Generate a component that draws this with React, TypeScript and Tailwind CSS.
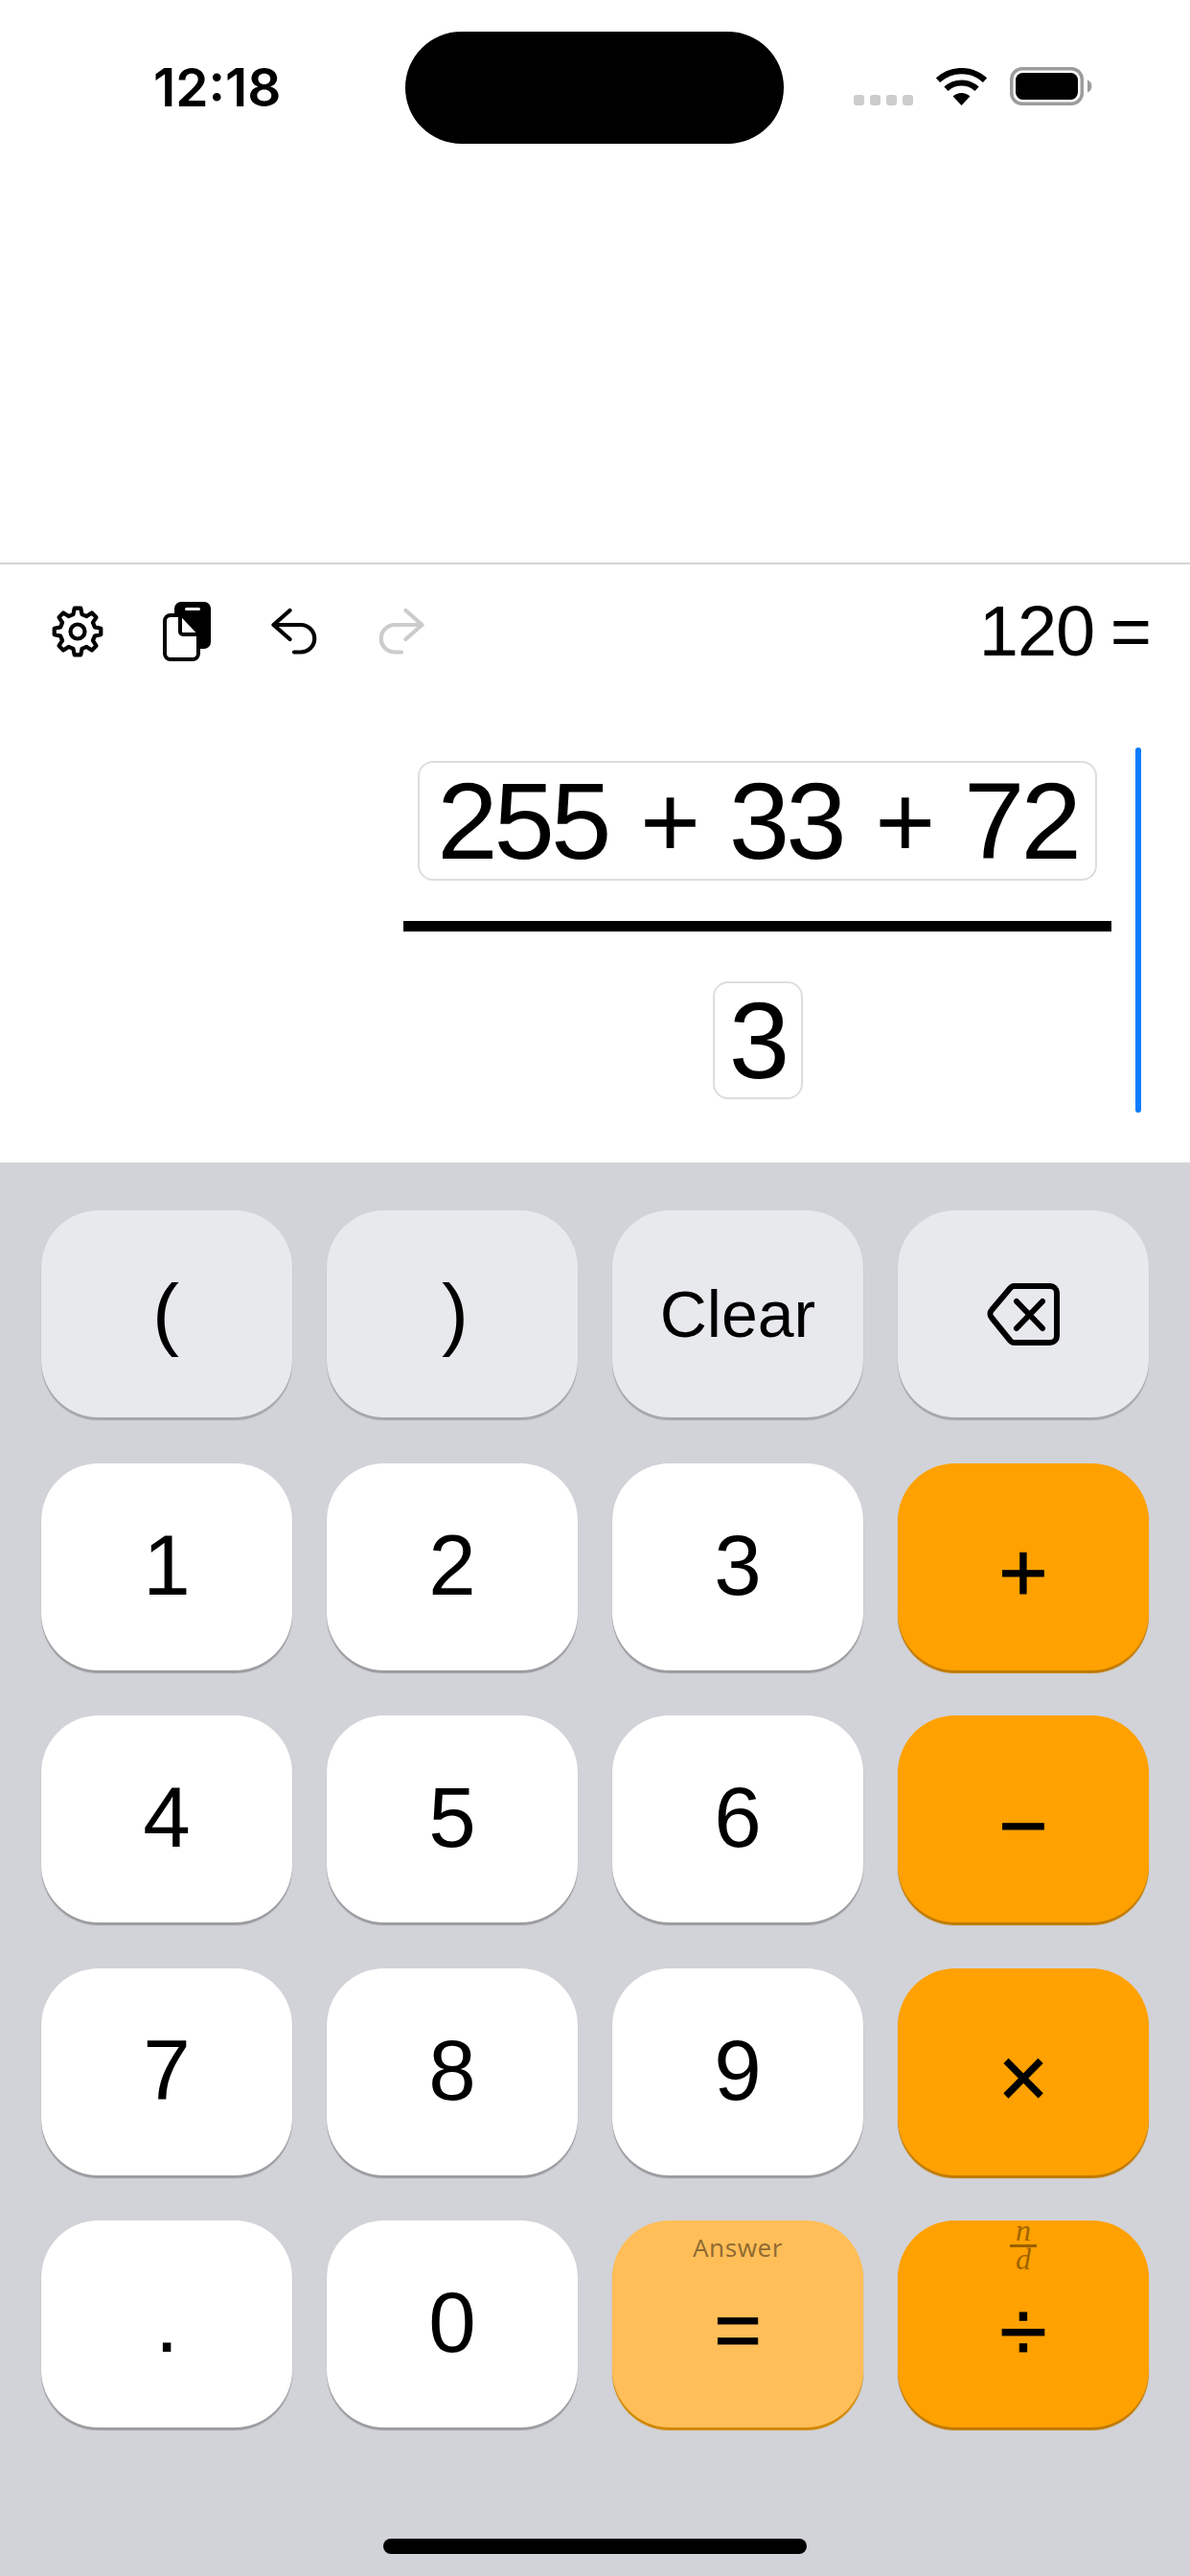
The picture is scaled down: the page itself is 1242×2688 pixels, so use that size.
import React from "react";

const SANS = "font-['Liberation_Sans',Arial,sans-serif]";

function gearPath() {
  const cx = 27, cy = 27, teeth = 8, ro = 24.5, ri = 18.5;
  const pts: string[] = [];
  for (let i = 0; i < teeth; i++) {
    const a = (i / teeth) * Math.PI * 2 - Math.PI / 2;
    const d = (Math.PI * 2) / teeth;
    const list: [number, number][] = [
      [ri, a - d * 0.32],
      [ro, a - d * 0.17],
      [ro, a + d * 0.17],
      [ri, a + d * 0.32],
    ];
    list.forEach(([r, t]) => pts.push(`${(cx + r * Math.cos(t)).toFixed(2)} ${(cy + r * Math.sin(t)).toFixed(2)}`));
  }
  return "M" + pts.join("L") + "Z";
}

function Wifi() {
  return (
    <svg width="53" height="39" viewBox="0 0 53 39" fill="none" className="shrink-0">
      <path d="M1.95 12.7A36 36 0 0 1 51.05 12.7" stroke="#000" strokeWidth="6.2" />
      <path d="M10.47 21.8A23.5 23.5 0 0 1 42.53 21.8" stroke="#000" strokeWidth="6.2" />
      <path d="M26.5 39L17.6 29.5A13 13 0 0 1 35.4 29.5Z" fill="#000" />
    </svg>
  );
}

function Battery() {
  return (
    <svg width="87" height="40" viewBox="0 0 87 40" fill="none" className="shrink-0">
      <rect x="1.75" y="1.75" width="73.5" height="36.5" rx="11" stroke="#9c9c9c" strokeWidth="3.5" />
      <rect x="6" y="6" width="65" height="28" rx="7.5" fill="#000" />
      <path d="M81 13.5a7 7 0 0 1 0 13Z" fill="#9c9c9c" />
    </svg>
  );
}

function Gear() {
  return (
    <svg width="54" height="54" viewBox="0 0 54 54" fill="none">
      <path d={gearPath()} stroke="#000" strokeWidth="4.2" strokeLinejoin="round" />
      <circle cx="27" cy="27" r="7.5" stroke="#000" strokeWidth="4.2" />
    </svg>
  );
}

function Docs() {
  return (
    <svg width="52" height="64" viewBox="0 0 52 64" fill="none">
      <rect x="13" y="1" width="38" height="49" rx="7" fill="#000" />
      <rect x="24" y="7" width="16" height="3" rx="1.5" fill="#fff" />
      <path
        d="M9 15H21L38 33V55a6 6 0 0 1-6 6H9a6 6 0 0 1-6-6V21a6 6 0 0 1 6-6Z"
        fill="#fff"
        stroke="#000"
        strokeWidth="4"
        strokeLinejoin="round"
      />
      <path d="M19 15V32a3 3 0 0 0 3 3H38" stroke="#000" strokeWidth="4" strokeLinejoin="round" />
    </svg>
  );
}

function Undo({ flip, color }: { flip?: boolean; color: string }) {
  return (
    <svg width="50" height="50" viewBox="0 0 50 50" fill="none" className={flip ? "-scale-x-100" : ""}>
      <path
        d="M19.5 3L2.5 18L19.5 33M2.5 18H31a14.25 14.25 0 0 1 0 28.5H24"
        stroke={color}
        strokeWidth="4.2"
        strokeLinecap="round"
        strokeLinejoin="round"
      />
    </svg>
  );
}

function Backspace() {
  return (
    <svg width="76" height="65" viewBox="0 0 76 65" fill="none">
      <path
        d="M29 3H66a7 7 0 0 1 7 7V55a7 7 0 0 1-7 7H29a6 6 0 0 1-5-2.5L5 36a6 6 0 0 1 0-8L24 5.5A6 6 0 0 1 29 3Z"
        stroke="#000"
        strokeWidth="6"
        strokeLinejoin="round"
      />
      <path d="M31 19L58 47M58 19L31 47" stroke="#000" strokeWidth="6" strokeLinecap="round" />
    </svg>
  );
}

type Tone = "grey" | "white" | "orange" | "answer";

const TONES: Record<Tone, string> = {
  grey: "bg-[#e8e9ed] shadow-[0_3px_1px_#a5a6aa]",
  white: "bg-white shadow-[0_3px_1px_#9b9ca0]",
  orange: "bg-[#ffa100] shadow-[0_3px_1px_#bf7900]",
  answer: "bg-[#ffbe58] shadow-[0_3px_1px_#d18600]",
};

function Key({ tone, children, className = "" }: { tone: Tone; children?: React.ReactNode; className?: string }) {
  return (
    <div
      className={`relative flex h-[216px] items-center justify-center rounded-[60px] leading-none text-black ${SANS} ${TONES[tone]} ${className}`}
    >
      {children}
    </div>
  );
}

function Digit({ v }: { v: string }) {
  return (
    <Key tone="white" className="pb-[3px] text-[89px]">
      {v}
    </Key>
  );
}

function Plus() {
  return <span className="align-[2px] text-[108px]">+</span>;
}

export default function App() {
  return (
    <div className={`flex h-[2688px] w-[1242px] flex-col overflow-hidden bg-white text-black ${SANS}`}>
      <div className="flex h-[589px] shrink-0 items-start border-b-2 border-[#d4d4d4] pt-[33px]">
        <div className="flex h-[117px] w-[423px] shrink-0 items-center pl-[160px] font-['Inter',sans-serif] text-[55px] font-semibold leading-none">
          12:18
        </div>
        <div className="h-[117px] w-[395px] shrink-0 rounded-full bg-black" />
        <div className="ml-[73px] mt-[37px] flex h-[40px] items-end">
          <div className="flex gap-[6px]">
            <div className="h-[11px] w-[11px] rounded-[3px] bg-[#cccccc]" />
            <div className="h-[11px] w-[11px] rounded-[3px] bg-[#cccccc]" />
            <div className="h-[11px] w-[11px] rounded-[3px] bg-[#cccccc]" />
            <div className="h-[11px] w-[11px] rounded-[3px] bg-[#cccccc]" />
          </div>
          <div className="ml-[24px]">
            <Wifi />
          </div>
          <div className="ml-[24px]">
            <Battery />
          </div>
        </div>
      </div>

      <div className="flex h-[140px] shrink-0 items-center pl-[54px] pr-[41px]">
        <Gear />
        <div className="ml-[61px]">
          <Docs />
        </div>
        <div className="ml-[62px]">
          <Undo color="#000" />
        </div>
        <div className="ml-[60px]">
          <Undo flip color="#cccccc" />
        </div>
        <div className="ml-auto text-[74px] leading-none tracking-[-1px] [word-spacing:-3px]">120 =</div>
      </div>

      <div className="flex flex-1 items-start justify-end pr-[51px] pt-[51px]">
        <div className="flex w-[739px] flex-col items-center pt-[14px]">
          <div className="flex h-[125px] w-[709px] items-center justify-center rounded-[16px] border-2 border-[#dddddd] text-[114px] leading-none tracking-[-4px] [word-spacing:6px]">
            <span className="whitespace-pre">
              255 <Plus /> 33 <Plus /> 72
            </span>
          </div>
          <div className="mt-[42px] h-[11px] w-full bg-black" />
          <div className="mt-[52px] flex h-[123px] w-[94px] items-center justify-center rounded-[16px] border-2 border-[#dddddd] text-[114px] leading-none tracking-[-4px]">
            3
          </div>
        </div>
        <div className="ml-[25px] h-[381px] w-[6px] rounded-full bg-[#0a7cff]" />
      </div>

      <div className="flex h-[1475px] shrink-0 flex-col bg-[#d2d3d8] px-[43px] pt-[50px]">
        <div className="grid grid-cols-4 gap-x-[36px] gap-y-[47.5px]">
          <Key tone="grey" className="pb-[3px] pr-[2px] text-[84px]">(</Key>
          <Key tone="grey" className="pb-[3px] pl-[6px] text-[84px]">)</Key>
          <Key tone="grey" className="text-[68px]">Clear</Key>
          <Key tone="grey">
            <Backspace />
          </Key>

          <Digit v="1" />
          <Digit v="2" />
          <Digit v="3" />
          <Key tone="orange" className="pt-[12px] text-[88px] [-webkit-text-stroke:1px_black]">+</Key>

          <Digit v="4" />
          <Digit v="5" />
          <Digit v="6" />
          <Key tone="orange" className="pt-[14px] text-[88px] [-webkit-text-stroke:1px_black]">−</Key>

          <Digit v="7" />
          <Digit v="8" />
          <Digit v="9" />
          <Key tone="orange" className="pt-[12px] text-[90px] [-webkit-text-stroke:1px_black]">×</Key>

          <Digit v="." />
          <Digit v="0" />
          <Key tone="answer" className="pt-[10px] text-[85px] [-webkit-text-stroke:1px_black]">
            <span className="absolute left-[40px] right-[40px] top-[15px] text-center font-['Noto_Sans',sans-serif] text-[26px] leading-none tracking-[0.5px] text-black/45 [-webkit-text-stroke:0]">
              Answer
            </span>
            =
          </Key>
          <Key tone="orange" className="pt-[16px] text-[90px] [-webkit-text-stroke:1px_black]">
            <span className="absolute left-[100px] right-[100px] top-[1px] flex flex-col items-center font-['Liberation_Serif',serif] text-[32px] italic leading-[18px] text-black/40 [-webkit-text-stroke:0]">
              <span>n</span>
              <span className="mt-[6px] h-[3px] w-[28px] bg-black/40" />
              <span className="mt-[3px]">d</span>
            </span>
            ÷
          </Key>
        </div>
        <div className="mx-auto mb-[23px] mt-auto h-[16px] w-[442px] rounded-full bg-black" />
      </div>
    </div>
  );
}
